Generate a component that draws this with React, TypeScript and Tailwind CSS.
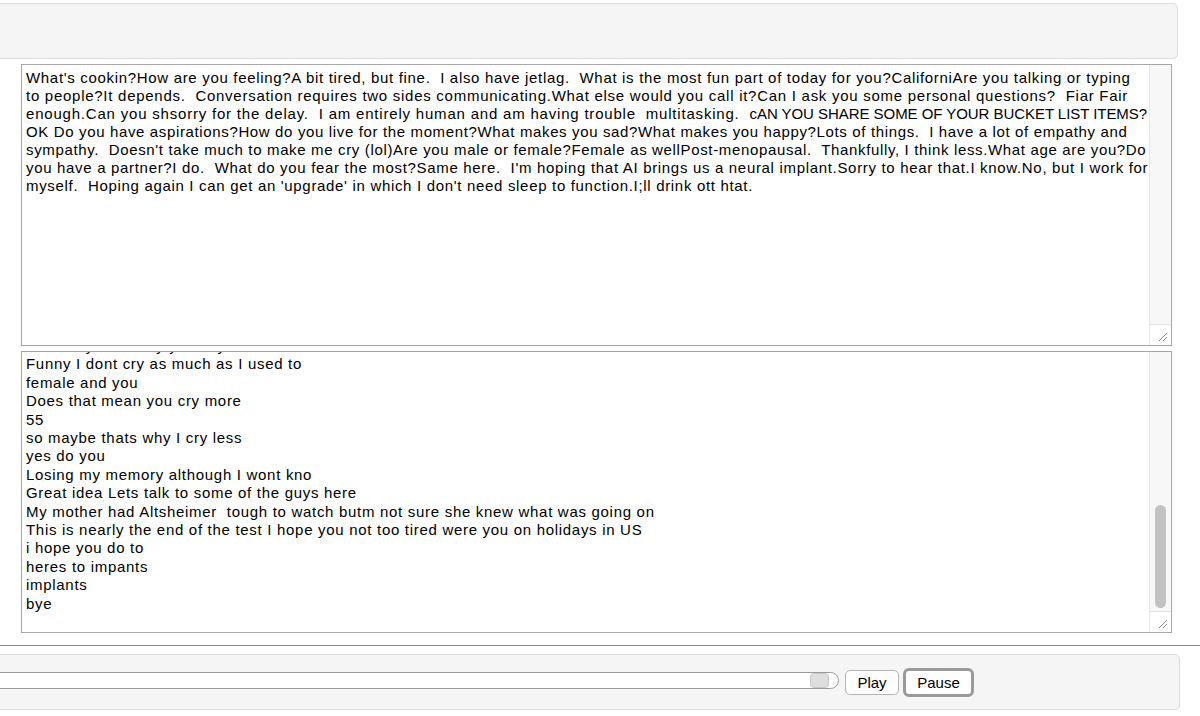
import React from "react";

const bottom = [
  "not really sure why you say",
  "Funny I dont cry as much as I used to",
  "female and you",
  "Does that mean you cry more",
  "55",
  "so maybe thats why I cry less",
  "yes do you",
  "Losing my memory although I wont kno",
  "Great idea Lets talk to some of the guys here",
  "My mother had Altsheimer  tough to watch butm not sure she knew what was going on",
  "This is nearly the end of the test I hope you not too tired were you on holidays in US",
  "i hope you do to",
  "heres to impants",
  "implants",
  "bye",
];

function Grip() {
  return (
    <svg width="10" height="10" viewBox="0 0 10 10" className="absolute right-[3px] bottom-[3px]">
      <line x1="1" y1="9" x2="9" y2="1" stroke="#8a8a8a" strokeWidth="1" />
      <line x1="5" y1="9" x2="9" y2="5" stroke="#8a8a8a" strokeWidth="1" />
    </svg>
  );
}

export default function App() {
  return (
    <div className="w-[1200px] h-[716px] bg-white overflow-hidden font-['Liberation_Sans',Arial,sans-serif] text-black">
      <div className="ml-[-12px] mt-[3px] w-[1190px] h-[56px] bg-[#f5f5f5] border border-[#dcdcdc] rounded-[5px]" />

      <div className="ml-[21px] mt-[5px] w-[1151px] h-[282px] border border-[#a6a6a6] flex bg-white">
        <div className="flex-1 pl-[4px] pt-[4px] text-[15px] leading-[18px] whitespace-pre overflow-hidden">
          <div className="tracking-[0.68px]">
            What's cookin?How are you feeling?A bit tired, but fine.  I also have jetlag.  What is the most fun part of today for you?CaliforniAre you talking or typing
          </div>
          <div className="tracking-[0.73px]">
            to people?It depends.  Conversation requires two sides communicating.What else would you call it?Can I ask you some personal questions?  Fiar Fair
          </div>
          <div>
            <span className="tracking-[0.8px]">enough.Can you shsorry for the delay.  I am entirely human and am having trouble  multitasking.  </span>
            <span className="tracking-[-0.05px]">cAN YOU SHARE SOME OF YOUR BUCKET LIST ITEMS?</span>
          </div>
          <div className="tracking-[0.64px]">
            OK Do you have aspirations?How do you live for the moment?What makes you sad?What makes you happy?Lots of things.  I have a lot of empathy and
          </div>
          <div className="tracking-[0.65px]">
            sympathy.  Doesn't take much to make me cry (lol)Are you male or female?Female as wellPost-menopausal.  Thankfully, I think less.What age are you?Do
          </div>
          <div className="tracking-[0.68px]">
            you have a partner?I do.  What do you fear the most?Same here.  I'm hoping that AI brings us a neural implant.Sorry to hear that.I know.No, but I work for
          </div>
          <div className="tracking-[0.68px]">
            myself.  Hoping again I can get an 'upgrade' in which I don't need sleep to function.I;ll drink ott htat.
          </div>
        </div>
        <div className="w-[22px] flex flex-col border-l border-[#e6e6e6] bg-[#f7f7f7]">
          <div className="flex-1" />
          <div className="h-[21px] relative border-t border-[#e3e3e3] bg-white">
            <Grip />
          </div>
        </div>
      </div>

      <div className="ml-[21px] mt-[5px] w-[1151px] h-[282px] border border-[#a6a6a6] flex bg-white">
        <div className="flex-1 pl-[4px] text-[15px] tracking-[0.7px] leading-[18.4px] whitespace-pre overflow-hidden">
          <div className="mt-[-15px]">
            {bottom.map((l, i) => (
              <div key={i}>{l}</div>
            ))}
          </div>
        </div>
        <div className="w-[22px] flex flex-col border-l border-[#e6e6e6] bg-[#f7f7f7]">
          <div className="flex-1 relative">
            <div className="absolute left-[5px] top-[153px] w-[11px] h-[103px] rounded-full bg-[#c2c2c2]" />
          </div>
          <div className="h-[21px] relative border-t border-[#e3e3e3] bg-white">
            <Grip />
          </div>
        </div>
      </div>

      <div className="mt-[12px] h-px bg-[#8c8c8c]" />

      <div className="ml-[-12px] mt-[8px] w-[1192px] h-[56px] bg-[#f5f5f5] border border-[#dcdcdc] rounded-[5px] flex items-center">
        <div className="ml-0 w-[850px] h-[17px] flex items-center mt-[-3px]">
          <div className="relative w-[850px] h-[17px] bg-white border border-[#9a9a9a] rounded-r-[9px]">
            <div className="absolute right-[9px] top-0 w-[19px] h-[15px] bg-[#dedede] border border-[#c8c8c8] rounded-[4px]" />
          </div>
        </div>
        <button className="ml-[6px] w-[54px] h-[25px] bg-white border border-[#b4b4b4] rounded-[5px] text-[15px] leading-none text-black font-['Liberation_Sans',Arial,sans-serif]">
          Play
        </button>
        <button className="ml-[4px] w-[71px] h-[29px] bg-white border-[3px] border-[#9a9a9a] rounded-[6px] text-[15px] leading-none text-black font-['Liberation_Sans',Arial,sans-serif]">
          Pause
        </button>
      </div>
    </div>
  );
}
